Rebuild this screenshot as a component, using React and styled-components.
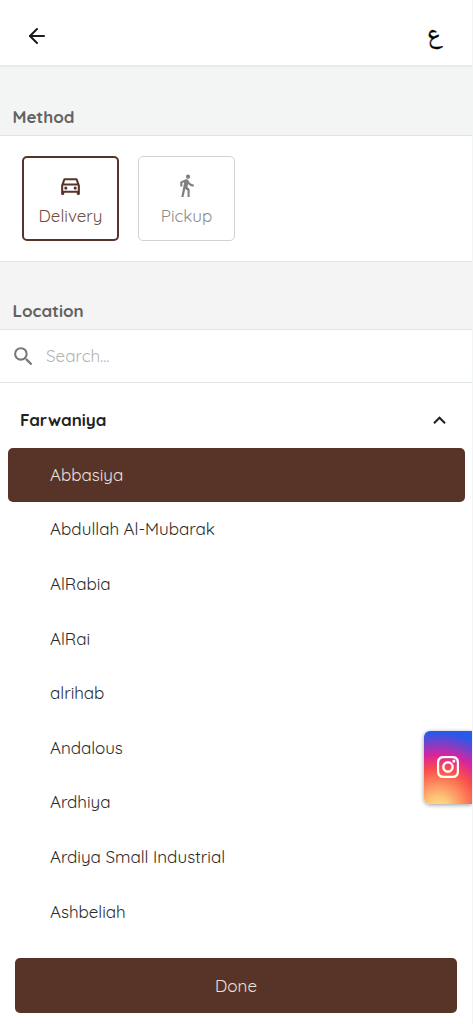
import React from "react"
import styled, { createGlobalStyle } from "styled-components"
import { ArrowLeft } from "lucide-react"
import {
  MdOutlineDirectionsCar,
  MdDirectionsWalk,
  MdSearch,
  MdKeyboardArrowUp,
} from "react-icons/md"
import { BsInstagram } from "react-icons/bs"

const GlobalStyle = createGlobalStyle`
  * {
    box-sizing: border-box;
  }

  body {
    margin: 0;
    background: #fff;
    font-family: Quicksand, Lato, sans-serif;
    font-size: 17px;
    letter-spacing: -0.04px;
    color: #222;
  }

  button {
    font: inherit;
    letter-spacing: inherit;
    cursor: pointer;
  }
`

const Page = styled.div`
  position: relative;
  display: flex;
  flex-direction: column;
  height: 1024px;
  overflow: hidden;
  border-right: 1px solid #f3f4f4;
`

const Header = styled.header`
  display: flex;
  flex: none;
  align-items: center;
  justify-content: space-between;
  height: 67px;
  padding: 6px 30px 0 25px;
  border-bottom: 2px solid #e7e9eb;

  svg {
    color: #1b1b1b;
  }
`

const Language = styled.span`
  padding-top: 3px;
  font-family: "Noto Naskh Arabic", Amiri, "DejaVu Sans", sans-serif;
  font-size: 25px;
  line-height: 32px;
  color: #000;
  -webkit-text-stroke: 0.4px #000;
`

const SectionTitle = styled.h2`
  display: flex;
  flex: none;
  align-items: flex-end;
  height: ${(props) => props.$height}px;
  margin: 0;
  padding: 0 12.5px 8px;
  border-bottom: 1px solid #e3e5e5;
  background: ${(props) => props.$background};
  font-size: 17px;
  font-weight: 700;
  line-height: 20px;
  color: #626262;
`

const Methods = styled.div`
  display: flex;
  flex: none;
  gap: 19px;
  height: 126px;
  padding: 20px 22px;
  border-bottom: 1px solid #e6e6e6;
`

const Method = styled.button`
  display: flex;
  flex-direction: column;
  align-items: center;
  width: 97px;
  height: 85px;
  padding: ${(props) => (props.$active ? "15px 0 0" : "16px 0 0")};
  border: ${(props) => (props.$active ? "2px solid #583328" : "1px solid #d2d2d2")};
  border-radius: 5px;
  background: #fff;
  line-height: 22px;
  color: ${(props) => (props.$active ? "#704d43" : "#8c8c8c")};

  svg {
    margin-bottom: 7px;
    color: ${(props) => (props.$active ? "#583328" : "#808080")};
  }
`

const SearchBar = styled.label`
  display: flex;
  flex: none;
  align-items: center;
  gap: 10px;
  height: 53px;
  padding: 0 11px;
  border-bottom: 1px solid #dfe3e4;
  color: #777;

  input {
    width: 300px;
    padding: 0 0 1px;
    border: 0;
    outline: 0;
    font: inherit;

    &::placeholder {
      color: #b2b2b2;
    }
  }
`

const Area = styled.div`
  display: flex;
  flex: none;
  align-items: center;
  justify-content: space-between;
  height: 64.5px;
  padding: 10px 20px 0;
  font-weight: 700;
`

const AreaName = styled.span`
  padding-bottom: 2px;
`

const Places = styled.ul`
  flex: 1;
  margin: 0;
  padding: 0 7px 0 8px;
  overflow: hidden;
  list-style: none;
`

const Place = styled.li`
  display: flex;
  align-items: center;
  height: 54.6px;
  padding: 0 0 1px 42px;
  border-radius: 5px;
  background: ${(props) => (props.$active ? "#583328" : "transparent")};
  color: ${(props) => (props.$active ? "#e9e0dd" : "#2b2b2b")};
`

const Footer = styled.footer`
  flex: none;
  height: 66px;
  padding: 0 15px;
`

const DoneButton = styled.button`
  width: 100%;
  height: 55px;
  padding: 0;
  border: 0;
  border-radius: 5px;
  background: #583328;
  color: #e9e0dd;
`

const InstagramButton = styled.a`
  position: absolute;
  top: 731px;
  right: 0;
  display: flex;
  align-items: center;
  justify-content: center;
  width: 48px;
  height: 73px;
  border-radius: 6px 0 0 6px;
  background:
    radial-gradient(
      circle at 30% 107%,
      #fee08b 0%,
      #fec779 14%,
      #fb7756 36%,
      #fa4c4c 48%,
      #d6249f 64%,
      #2859eb 90%
    );
  box-shadow: 0 1px 4px rgba(0, 0, 0, 0.4);
  color: #fff;

  svg {
    margin-bottom: 1px;
    stroke: #fff;
    stroke-width: 0.3px;
  }
`

const places = [
  "Abbasiya",
  "Abdullah Al-Mubarak",
  "AlRabia",
  "AlRai",
  "alrihab",
  "Andalous",
  "Ardhiya",
  "Ardiya Small Industrial",
  "Ashbeliah",
]

const App = () => {
  return (
    <>
      <GlobalStyle />
      <Page>
        <Header>
          <ArrowLeft size={24} />
          <Language lang="ar">ع</Language>
        </Header>
        <SectionTitle $height={69} $background="#f3f5f5">
          Method
        </SectionTitle>
        <Methods>
          <Method $active>
            <MdOutlineDirectionsCar size={25} />
            Delivery
          </Method>
          <Method>
            <MdDirectionsWalk size={25} />
            Pickup
          </Method>
        </Methods>
        <SectionTitle $height={68} $background="#f4f4f4">
          Location
        </SectionTitle>
        <SearchBar>
          <MdSearch size={25} />
          <input placeholder="Search..." />
        </SearchBar>
        <Area>
          <AreaName>Farwaniya</AreaName>
          <MdKeyboardArrowUp size={25} />
        </Area>
        <Places>
          {places.map((place, index) => {
            return (
              <Place key={place} $active={index === 0}>
                {place}
              </Place>
            )
          })}
        </Places>
        <Footer>
          <DoneButton>Done</DoneButton>
        </Footer>
        <InstagramButton aria-label="Instagram">
          <BsInstagram size={22} />
        </InstagramButton>
      </Page>
    </>
  )
}

export default App
